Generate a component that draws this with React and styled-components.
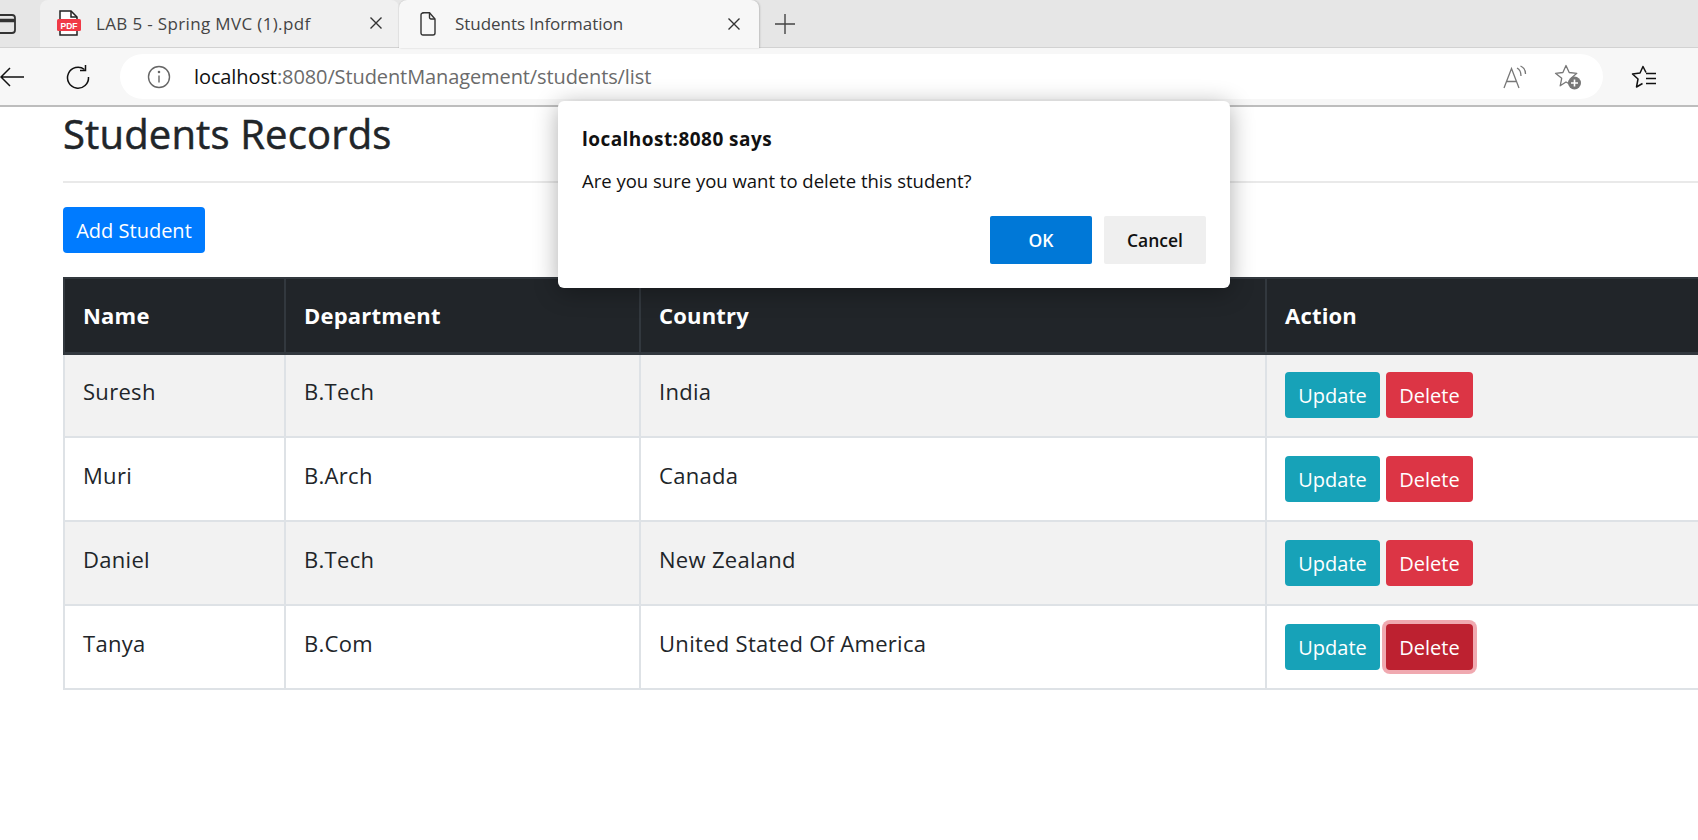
import React from "react";
import styled, { createGlobalStyle } from "styled-components";

const GlobalStyle = createGlobalStyle`
  html, body {
    margin: 0;
    padding: 0;
    height: 100%;
    background: #fff;
    overflow: hidden;
  }
  * { box-sizing: border-box; }
`;

const font = `"Open Sans", "Noto Sans", "Liberation Sans", sans-serif`;

const students = [
  { name: "Suresh", dept: "B.Tech", country: "India" },
  { name: "Muri", dept: "B.Arch", country: "Canada" },
  { name: "Daniel", dept: "B.Tech", country: "New Zealand" },
  { name: "Tanya", dept: "B.Com", country: "United Stated Of America" },
];

const WindowIcon = () => (
  <svg width="16" height="20" viewBox="0 0 16 20" fill="none" stroke="#333" strokeWidth="1.8">
    <rect x="-3" y="1" width="18" height="18" rx="3" />
    <path d="M-3 6.5h18" strokeWidth="3.5" />
  </svg>
);

const PdfIcon = () => (
  <svg width="24" height="26" viewBox="0 0 24 26">
    <path d="M3 1h11l6 6v18H3z" fill="#fff" stroke="#222" strokeWidth="1.5" />
    <path d="M14 1v6h6" fill="none" stroke="#222" strokeWidth="1.5" />
    <rect x="0" y="9" width="24" height="12" rx="1.5" fill="#f03a47" />
    <text x="12" y="18.5" textAnchor="middle" fontSize="8.5" fontWeight="700" fill="#fff" fontFamily="Liberation Sans, sans-serif">PDF</text>
  </svg>
);

const PageIcon = () => (
  <svg width="16" height="24" viewBox="0 0 16 24" fill="none" stroke="#333" strokeWidth="1.4">
    <path d="M3 .8h6.5L15 7v14a2 2 0 0 1-2 2H3a2 2 0 0 1-2-2V3a2 2 0 0 1 2-2z" />
    <path d="M9.5 .8V5.500a1.500 1.500 0 0 0 1.500 1.500h4" />
  </svg>
);

const CloseIcon = () => (
  <svg width="14" height="14" viewBox="0 0 14 14" stroke="#333" strokeWidth="1.4">
    <path d="M1.500 1.500l11 11M12.500 1.500l-11 11" />
  </svg>
);

const PlusIcon = () => (
  <svg width="20" height="20" viewBox="0 0 20 20" stroke="#444" strokeWidth="1.4">
    <path d="M10 0v20M0 10h20" />
  </svg>
);

const BackIcon = () => (
  <svg width="24" height="20" viewBox="0 0 24 20" fill="none" stroke="#111" strokeWidth="1.5">
    <path d="M24 10H1M10 1l-9 9 9 9" />
  </svg>
);

const ReloadIcon = () => (
  <svg width="26" height="26" viewBox="0 0 26 26" fill="none" stroke="#111" strokeWidth="1.5">
    <path d="M19.500 5.500A10.500 10.500 0 1 0 23.500 13" />
    <path d="M20.500 1v5.500H15" />
  </svg>
);

const InfoIcon = () => (
  <svg width="24" height="24" viewBox="0 0 24 24" fill="none" stroke="#666" strokeWidth="1.4">
    <circle cx="12" cy="12" r="10.500" />
    <path d="M12 10.500v7" />
    <circle cx="12" cy="7" r=".6" fill="#666" />
  </svg>
);

const ReadAloudIcon = () => (
  <svg width="24" height="24" viewBox="0 0 24 24" fill="none" stroke="#777" strokeWidth="1.3">
    <path d="M1 23L8.500 3.500 16 23M3.500 16.500h10" />
    <path d="M14 3c3 1.500 4 4 4 8M17.500 1c3.500 1.500 5 4.500 5 8" />
  </svg>
);

const FavAddIcon = () => (
  <svg width="28" height="26" viewBox="0 0 28 26">
    <path d="M12 1.500l3.200 7 7.600.8-5.700 5 1.600 7.500-6.700-3.800-5.800 3.800 1.500-7.500L1.500 9.300l7.400-.8z" fill="none" stroke="#777" strokeWidth="1.300" strokeLinejoin="round" />
    <circle cx="20.500" cy="19" r="6.500" fill="#777" />
    <path d="M20.500 15.500v7M17 19h7" stroke="#fff" strokeWidth="1.600" />
  </svg>
);

const FavListIcon = () => (
  <svg width="26" height="24" viewBox="0 0 26 24" fill="none" stroke="#111" strokeWidth="1.500">
    <path d="M15 7.500L12 1.500 9 8l-7.500 1L7 14l-1.500 8 6-3.500" strokeLinejoin="round" />
    <path d="M15 8.500h10M15 13.500h10M15 18.500h10" />
  </svg>
);

export default function App() {
  return (
    <Screen>
      <GlobalStyle />
      <TabStrip>
        <WindowButton>
          <WindowIcon />
        </WindowButton>
        <Tab>
          <TabIcon><PdfIcon /></TabIcon>
          <TabTitle>LAB 5 - Spring MVC (1).pdf</TabTitle>
          <CloseIcon />
        </Tab>
        <Tab $active>
          <TabIcon><PageIcon /></TabIcon>
          <TabTitle $active>Students Information</TabTitle>
          <CloseIcon />
        </Tab>
        <NewTab>
          <PlusIcon />
        </NewTab>
      </TabStrip>

      <Toolbar>
        <NavButton><BackIcon /></NavButton>
        <NavButton $wide><ReloadIcon /></NavButton>
        <AddressBar>
          <InfoIcon />
          <Url>
            localhost<UrlRest>:8080/StudentManagement/students/list</UrlRest>
          </Url>
          <AddressActions>
            <ReadAloudIcon />
            <FavAddIcon />
          </AddressActions>
        </AddressBar>
        <FavButton><FavListIcon /></FavButton>
      </Toolbar>

      <Page>
        <Heading>Students Records</Heading>
        <Rule />
        <AddButton>Add Student</AddButton>
        <Table>
          <thead>
            <tr>
              <HeadCell $width={221}>Name</HeadCell>
              <HeadCell $width={355}>Department</HeadCell>
              <HeadCell $width={626}>Country</HeadCell>
              <HeadCell>Action</HeadCell>
            </tr>
          </thead>
          <tbody>
            {students.map((s, i) => (
              <Row key={s.name} $striped={i % 2 === 0}>
                <Cell>{s.name}</Cell>
                <Cell>{s.dept}</Cell>
                <Cell>{s.country}</Cell>
                <Cell>
                  <Actions>
                    <UpdateButton>Update</UpdateButton>
                    <DeleteButton $focused={s.name === "Tanya"}>Delete</DeleteButton>
                  </Actions>
                </Cell>
              </Row>
            ))}
          </tbody>
        </Table>
      </Page>

      <Dialog>
        <DialogTitle>localhost:8080 says</DialogTitle>
        <DialogText>Are you sure you want to delete this student?</DialogText>
        <DialogButtons>
          <DialogButton $primary>OK</DialogButton>
          <DialogButton>Cancel</DialogButton>
        </DialogButtons>
      </Dialog>
    </Screen>
  );
}

const Screen = styled.div`
  position: relative;
  width: 1698px;
  height: 840px;
  overflow: hidden;
  font-family: ${font};
  background: #fff;
`;

const TabStrip = styled.div`
  display: flex;
  align-items: flex-start;
  height: 48px;
  background: #e6e6e6;
  border-bottom: 1px solid #d2d2d2;
`;

const WindowButton = styled.div`
  display: flex;
  align-items: center;
  width: 40px;
  height: 47px;
`;

const Tab = styled.div`
  position: relative;
  display: flex;
  align-items: center;
  width: ${(p) => (p.$active ? "360px" : "359px")};
  height: 48px;
  padding: 0 ${(p) => (p.$active ? "18px" : "16px")} 1px 17px;
  border-radius: 8px 8px 0 0;
  background: ${(p) => (p.$active ? "#f7f7f7" : "#f0f0f0")};
  border-bottom: ${(p) => (p.$active ? "0" : "1px solid #d2d2d2")};
  box-shadow: ${(p) => (p.$active ? "1px 0 2px rgba(0,0,0,.18), -1px 0 1px rgba(0,0,0,.06)" : "none")};
`;

const TabIcon = styled.span`
  display: flex;
  justify-content: center;
  width: 24px;
  margin-right: 15px;
`;

const TabTitle = styled.span`
  flex: 1;
  font-size: 17px;
  letter-spacing: ${(p) => (p.$active ? "-0.05px" : "0.35px")};
  color: #444;
  white-space: nowrap;
`;

const NewTab = styled.div`
  display: flex;
  align-items: center;
  justify-content: center;
  width: 52px;
  height: 47px;
`;

const Toolbar = styled.div`
  display: flex;
  align-items: center;
  height: 59px;
  background: #f7f7f7;
  border-bottom: 2px solid #bdbdbd;
`;

const NavButton = styled.div`
  display: flex;
  align-items: center;
  justify-content: ${(p) => (p.$wide ? "center" : "flex-start")};
  width: ${(p) => (p.$wide ? "62px" : "47px")};
`;

const AddressBar = styled.div`
  display: flex;
  align-items: center;
  gap: 23px;
  width: 1483px;
  height: 45px;
  margin-left: 11px;
  padding: 0 21px 0 27px;
  background: #fff;
  border-radius: 23px;
`;

const Url = styled.span`
  flex: 1;
  font-size: 20px;
  letter-spacing: -0.1px;
  color: #111;
  white-space: nowrap;
`;

const UrlRest = styled.span`
  color: #6b6b6b;
`;

const AddressActions = styled.div`
  display: flex;
  align-items: center;
  gap: 27px;
`;

const FavButton = styled.div`
  display: flex;
  margin-left: 28px;
`;

const Page = styled.main`
  padding: 0 0 0 63px;
`;

const Heading = styled.h1`
  margin: 0;
  height: 74px;
  padding-top: 3px;
  font-size: 40px;
  font-weight: 500;
  line-height: 48px;
  letter-spacing: 0.15px;
  -webkit-text-stroke: 0.5px #212529;
  color: #212529;
`;

const Rule = styled.hr`
  margin: 0 0 24px;
  border: 0;
  border-top: 2px solid #e9e9e9;
`;

const BaseButton = styled.button`
  height: 46px;
  padding: 1px 0 0;
  border: 0;
  border-radius: 4px;
  font-family: ${font};
  font-size: 20px;
  color: #fff;
`;

const AddButton = styled(BaseButton)`
  display: block;
  width: 142px;
  margin-bottom: 24px;
  background: #007bff;
`;

const Table = styled.table`
  width: 1660px;
  border-collapse: collapse;
  table-layout: fixed;
  font-size: 22px;
  color: #212529;
`;

const HeadCell = styled.th`
  width: ${(p) => (p.$width ? `${p.$width}px` : "auto")};
  height: 75px;
  padding: 0 18px;
  border: 2px solid #32383e;
  border-bottom-width: 3px;
  background: #212529;
  color: #fff;
  font-size: 22px;
  font-weight: 700;
  letter-spacing: 0.2px;
  text-align: left;
`;

const Row = styled.tr`
  background: ${(p) => (p.$striped ? "#f2f2f2" : "#fff")};
`;

const Cell = styled.td`
  height: 84px;
  padding: 0 18px 9px;
  border: 2px solid #dee2e6;
  letter-spacing: 0.3px;
`;

const Actions = styled.div`
  display: flex;
  gap: 6px;
  margin-bottom: -8px;
`;

const UpdateButton = styled(BaseButton)`
  width: 95px;
  background: #17a2b8;
`;

const DeleteButton = styled(BaseButton)`
  width: 87px;
  background: ${(p) => (p.$focused ? "#bd2130" : "#dc3545")};
  box-shadow: ${(p) => (p.$focused ? "0 0 0 4px rgba(225,83,97,.5)" : "none")};
`;

const Dialog = styled.div`
  position: absolute;
  top: 101px;
  left: 558px;
  width: 672px;
  height: 187px;
  padding: 26px 24px 0 24px;
  background: #fff;
  border-radius: 6px;
  box-shadow: 0 4px 24px rgba(0, 0, 0, 0.32);
`;

const DialogTitle = styled.div`
  font-size: 19px;
  font-weight: 700;
  line-height: 24px;
  letter-spacing: 0.45px;
  color: #111;
`;

const DialogText = styled.p`
  margin: 18px 0 0;
  font-size: 18.5px;
  line-height: 24px;
  color: #111;
`;

const DialogButtons = styled.div`
  display: flex;
  justify-content: flex-end;
  gap: 12px;
  margin-top: 23px;
`;

const DialogButton = styled.button`
  width: 102px;
  height: 48px;
  border: 0;
  border-radius: 2px;
  font-family: ${font};
  font-size: 17.5px;
  font-weight: 600;
  background: ${(p) => (p.$primary ? "#0078d7" : "#efefef")};
  color: ${(p) => (p.$primary ? "#fff" : "#111")};
`;
